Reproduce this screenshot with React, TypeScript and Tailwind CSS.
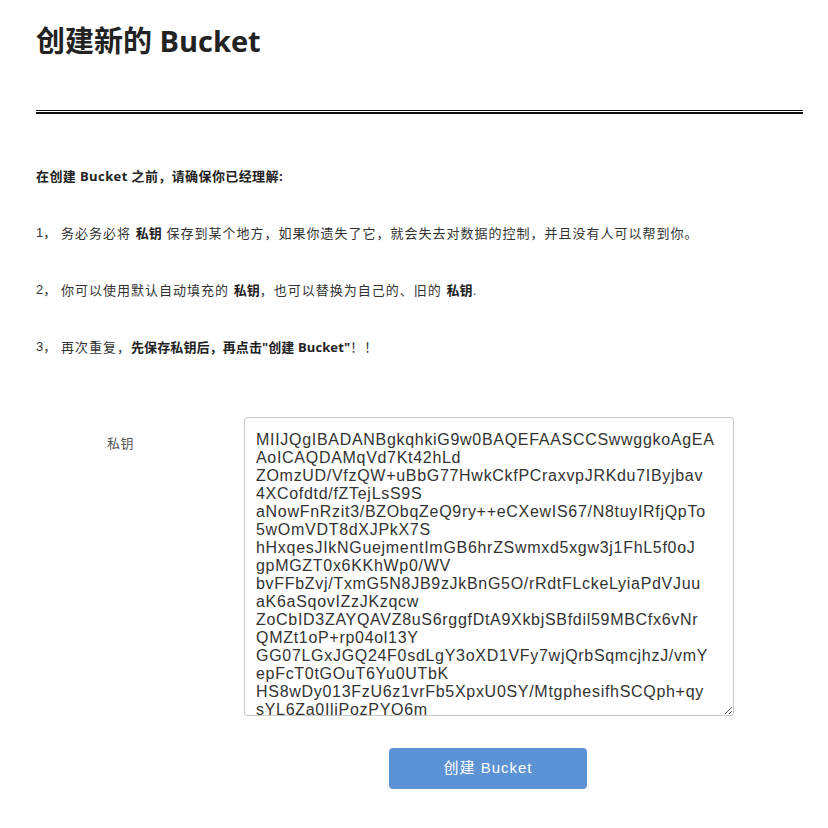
import React from "react";

const KEY = [
  "MIIJQgIBADANBgkqhkiG9w0BAQEFAASCCSwwggkoAgEA",
  "AoICAQDAMqVd7Kt42hLd",
  "ZOmzUD/VfzQW+uBbG77HwkCkfPCraxvpJRKdu7IByjbav",
  "4XCofdtd/fZTejLsS9S",
  "aNowFnRzit3/BZObqZeQ9ry++eCXewIS67/N8tuyIRfjQpTo",
  "5wOmVDT8dXJPkX7S",
  "hHxqesJIkNGuejmentImGB6hrZSwmxd5xgw3j1FhL5f0oJ",
  "gpMGZT0x6KKhWp0/WV",
  "bvFFbZvj/TxmG5N8JB9zJkBnG5O/rRdtFLckeLyiaPdVJuu",
  "aK6aSqovIZzJKzqcw",
  "ZoCbID3ZAYQAVZ8uS6rggfDtA9XkbjSBfdil59MBCfx6vNr",
  "QMZt1oP+rp04ol13Y",
  "GG07LGxJGQ24F0sdLgY3oXD1VFy7wjQrbSqmcjhzJ/vmY",
  "epFcT0tGOuT6Yu0UTbK",
  "HS8wDy013FzU6z1vrFb5XpxU0SY/MtgphesifhSCQph+qy",
  "sYL6Za0IliPozPYQ6m",
  "",
].join("\n");

const body = { fontFamily: '"Liberation Sans", "Noto Sans CJK SC", sans-serif' };
const bold = { fontFamily: '"Open Sans", "Noto Sans CJK SC", sans-serif' };

export default function App() {
  return (
    <div className="min-h-[828px] bg-white pl-9 pr-[25px] pt-[20px] text-[#333]" style={body}>
      <h1 className="h-[42px] text-[29px] leading-[42px] font-bold text-[#222]" style={bold}>
        创建新的 Bucket
      </h1>
      <div className="mt-[48px] h-[4px] border-t border-b-2 border-[#111]" />

      <p className="mt-[53px] h-[18px] text-[13px] leading-[18px] tracking-[0.4px] font-bold text-[#222]" style={bold}>
        在创建 Bucket 之前，请确保你已经理解:
      </p>

      <p className="mt-[39px] flex h-[18px] text-[13px] leading-[18px]">
        <span className="w-[25px] shrink-0">1，</span>
        <span className="tracking-[1px]">
          务必务必将 <b className="font-bold tracking-[0.1px] text-[#222]" style={bold}>私钥</b> 保存到某个地方，如果你遗失了它，就会失去对数据的控制，并且没有人可以帮到你。
        </span>
      </p>
      <p className="mt-[39px] flex h-[18px] text-[13px] leading-[18px]">
        <span className="w-[25px] shrink-0">2，</span>
        <span className="tracking-[1px]">
          你可以使用默认自动填充的 <b className="font-bold tracking-[0.1px] text-[#222]" style={bold}>私钥</b>，也可以替换为自己的、旧的 <b className="font-bold tracking-[0.1px] text-[#222]" style={bold}>私钥</b>.
        </span>
      </p>
      <p className="mt-[39px] flex h-[18px] text-[13px] leading-[18px]">
        <span className="w-[25px] shrink-0">3，</span>
        <span className="tracking-[1px]">
          再次重复，<b className="font-bold tracking-[0.1px] text-[#222]" style={bold}>先保存私钥后，再点击"创建 Bucket"</b>！！
        </span>
      </p>

      <div className="mt-[61px] flex">
        <label className="w-[208px] shrink-0 pl-[71px] pt-[18px] text-[13px] leading-[18px] tracking-[0.5px] text-[#555]">
          私钥
        </label>
        <textarea
          defaultValue={KEY}
          wrap="off"
          spellCheck={false}
          className="h-[299px] w-[490px] overflow-hidden whitespace-pre rounded-[3px] border border-[#c8c8c8] bg-white pl-[11px] pt-[13px] text-[16px] leading-[18px] tracking-[0.7px] text-[#333] outline-none"
          style={{ fontFamily: '"Liberation Sans", Arial, sans-serif' }}
        />
      </div>

      <div className="mt-[32px] flex pl-[353px]">
        <button className="h-[41px] w-[198px] rounded-[4px] bg-[#5b93d4] text-[15px] tracking-[1px] text-white">
          创建 Bucket
        </button>
      </div>
    </div>
  );
}
